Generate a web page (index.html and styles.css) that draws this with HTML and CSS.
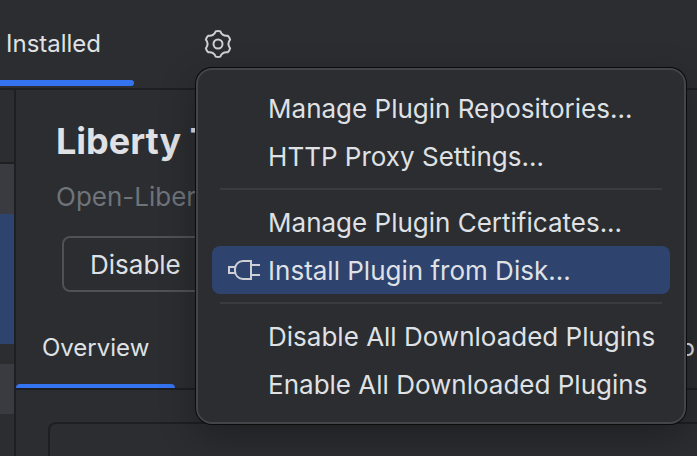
FILE: index.html
```html
<!DOCTYPE html>
<html lang="en">
<head>
<meta charset="utf-8">
<title>Plugins</title>
<link rel="stylesheet" href="styles.css">
</head>
<body>
<header class="topbar">
  <button class="tab tab-top" type="button">Installed</button>
  <div class="settings">
    <button class="gear" type="button" aria-label="Plugin settings" aria-haspopup="menu">
      <svg class="icon" viewBox="0 0 32 32" aria-hidden="true">
        <path d="M13.7 3.4Q16 2.600 18.3 3.4Q20.35 8.470 25.8 7.7Q27.600 9.300 28.1 11.7Q24.7 16 28.1 20.3Q27.600 22.700 25.8 24.3Q20.35 23.530 18.3 28.6Q16 29.400 13.7 28.6Q11.65 23.530 6.2 24.3Q4.400 22.700 3.9 20.3Q7.3 16 3.9 11.7Q4.400 9.300 6.2 7.7Q11.65 8.470 13.7 3.4Z"/>
        <circle cx="16" cy="16" r="4.5"/>
      </svg>
    </button>
    <div class="menu" role="menu">
      <button class="item" type="button" role="menuitem">Manage Plugin Repositories...</button>
      <button class="item" type="button" role="menuitem">HTTP Proxy Settings...</button>
      <hr class="separator">
      <button class="item" type="button" role="menuitem">Manage Plugin Certificates...</button>
      <button class="item item-selected" type="button" role="menuitem">
        <svg class="icon" viewBox="0 0 32 32" aria-hidden="true">
          <path d="M7 12H1v6h6M23 6h-8a8 8 0 0 0-8 8v2a8 8 0 0 0 8 8h8zM23 10h9M23 20h9"/>
        </svg>
        Install Plugin from Disk...
      </button>
      <hr class="separator">
      <button class="item" type="button" role="menuitem">Disable All Downloaded Plugins</button>
      <button class="item" type="button" role="menuitem">Enable All Downloaded Plugins</button>
    </div>
  </div>
</header>
<div class="content">
  <aside class="list">
    <div class="list-search"></div>
    <div class="list-group"></div>
    <div class="list-selected"></div>
    <div class="list-gap"></div>
    <div class="list-group"></div>
  </aside>
  <main class="details">
    <h1 class="title">Liberty Tools</h1>
    <p class="vendor">Open-Liberty</p>
    <button class="disable" type="button">Disable</button>
    <nav class="tabs">
      <button class="tab tab-overview" type="button">Overview</button>
      <button class="tab tab-info" type="button">Info</button>
    </nav>
    <section class="preview"></section>
  </main>
</div>
</body>
</html>
```
FILE: styles.css
```css
* {
  box-sizing: border-box;
}

body {
  margin: 0;
  height: 100vh;
  display: flex;
  flex-direction: column;
  overflow: hidden;
  background: #2b2d30;
  color: #dfe1e5;
  font-family: Inter, "Liberation Sans", sans-serif;
  font-size: 26px;
  line-height: 32px;
}

button {
  border: 0;
  background: none;
  color: inherit;
  font: inherit;
  white-space: nowrap;
}

.icon {
  display: block;
  width: 32px;
  height: 32px;
  flex: none;
  fill: none;
  stroke: #ced0d6;
  stroke-width: 2;
}

.topbar {
  display: flex;
  align-items: center;
  height: 90px;
  flex: none;
  border-bottom: 2px solid #1e1f22;
}

.tab {
  position: relative;
  font-size: 24px;
}

.tab::after {
  content: "";
  position: absolute;
  left: 0;
  right: 0;
  background: #3574f0;
}

.tab-top {
  height: 88px;
  padding: 0 33px 0 6px;
}

.tab-top::after {
  bottom: 2px;
  height: 6px;
  border-radius: 0 3px 3px 0;
}

.settings {
  position: relative;
  margin-left: 68px;
}

.gear {
  display: block;
  padding: 0;
}

.menu {
  position: absolute;
  z-index: 1;
  top: 40px;
  left: -6px;
  min-width: 490px;
  padding: 14px;
  border: 2px solid #43454a;
  border-radius: 16px;
  background: #2b2d30;
  box-shadow: 0 0 0 1px #0b0b0c, 0 12px 36px rgba(0, 0, 0, 0.3);
}

.item {
  display: flex;
  align-items: center;
  gap: 8px;
  width: 100%;
  height: 48px;
  padding: 2px 14px 0 56px;
  border-radius: 8px;
}

.item-selected {
  padding-left: 16px;
  background: #2e436e;
}

.separator {
  height: 2px;
  margin: 8px;
  border: 0;
  background: #393b40;
}

.content {
  display: flex;
  flex: 1;
  min-height: 0;
}

.list {
  width: 16px;
  flex: none;
  border-right: 2px solid #1e1f22;
}

.list-search {
  height: 74px;
  border-bottom: 2px solid #1e1f22;
}

.list-group {
  height: 50px;
  background: #393b40;
}

.list-selected {
  height: 130px;
  background: #2e436e;
}

.list-gap {
  height: 20px;
}

.details {
  display: flex;
  flex-direction: column;
  flex: 1;
  min-width: 0;
  padding-top: 29px;
}

.title {
  margin: 0 40px;
  font-size: 36px;
  line-height: 44px;
}

.vendor {
  margin: 18px 40px 23px;
  color: #6f737a;
}

.disable {
  align-self: flex-start;
  height: 56px;
  margin-left: 46px;
  padding: 2px 26px 0;
  border: 2px solid #4e5157;
  border-radius: 8px;
}

.tabs {
  display: flex;
  justify-content: space-between;
  margin-top: 16px;
  border-bottom: 2px solid #1e1f22;
}

.tab-overview,
.tab-info {
  height: 80px;
  padding: 0 26px;
}

.tab-overview::after {
  bottom: 0;
  height: 4px;
  border-radius: 4px 4px 0 0;
}

.tab-info {
  padding-right: 2px;
}

.tab-info::after {
  content: none;
}

.preview {
  flex: 1;
  margin: 32px 0 0 32px;
  border: solid #1e1f22;
  border-width: 2px 0 0 2px;
  border-radius: 8px 0 0 0;
}
```
